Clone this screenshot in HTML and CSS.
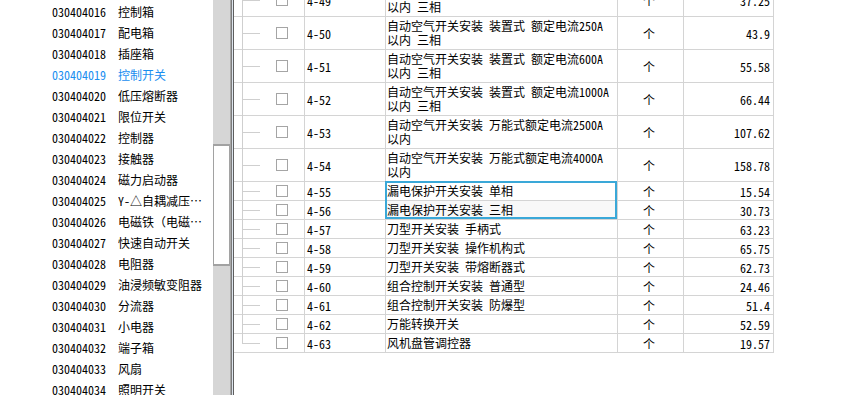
FILE: index.html
```html
<!DOCTYPE html>
<html lang="zh-CN">
<head>
<meta charset="utf-8">
<title>清单定额</title>
<link rel="stylesheet" href="styles.css">
</head>
<body>
<div class="app">
  <aside class="left">
    <ul class="list">
      <li class="item"><span class="code">030404016</span><span class="name">控制箱</span></li>
      <li class="item"><span class="code">030404017</span><span class="name">配电箱</span></li>
      <li class="item"><span class="code">030404018</span><span class="name">插座箱</span></li>
      <li class="item active"><span class="code">030404019</span><span class="name">控制开关</span></li>
      <li class="item"><span class="code">030404020</span><span class="name">低压熔断器</span></li>
      <li class="item"><span class="code">030404021</span><span class="name">限位开关</span></li>
      <li class="item"><span class="code">030404022</span><span class="name">控制器</span></li>
      <li class="item"><span class="code">030404023</span><span class="name">接触器</span></li>
      <li class="item"><span class="code">030404024</span><span class="name">磁力启动器</span></li>
      <li class="item"><span class="code">030404025</span><span class="name">Y-△自耦减压启动器</span></li>
      <li class="item"><span class="code">030404026</span><span class="name full">电磁铁（电磁制动器）</span></li>
      <li class="item"><span class="code">030404027</span><span class="name">快速自动开关</span></li>
      <li class="item"><span class="code">030404028</span><span class="name">电阻器</span></li>
      <li class="item"><span class="code">030404029</span><span class="name">油浸频敏变阻器</span></li>
      <li class="item"><span class="code">030404030</span><span class="name">分流器</span></li>
      <li class="item"><span class="code">030404031</span><span class="name">小电器</span></li>
      <li class="item"><span class="code">030404032</span><span class="name">端子箱</span></li>
      <li class="item"><span class="code">030404033</span><span class="name">风扇</span></li>
      <li class="item"><span class="code">030404034</span><span class="name">照明开关</span></li>
    </ul>
  </aside>
  <div class="vscroll"><div class="thumb"></div></div>
  <div class="divider"></div>
  <main class="grid">
    <div class="rows">
      <div class="row tall"><div class="c-tree"><span class="cb"></span></div><div class="c-code">4-49</div><div class="c-desc">自动空气开关安装 装置式 额定电流100A<br>以内 三相</div><div class="c-unit">个</div><div class="c-price">37.25</div></div>
      <div class="row tall"><div class="c-tree"><span class="cb"></span></div><div class="c-code">4-50</div><div class="c-desc">自动空气开关安装 装置式 额定电流250A<br>以内 三相</div><div class="c-unit">个</div><div class="c-price">43.9</div></div>
      <div class="row tall"><div class="c-tree"><span class="cb"></span></div><div class="c-code">4-51</div><div class="c-desc">自动空气开关安装 装置式 额定电流600A<br>以内 三相</div><div class="c-unit">个</div><div class="c-price">55.58</div></div>
      <div class="row tall"><div class="c-tree"><span class="cb"></span></div><div class="c-code">4-52</div><div class="c-desc">自动空气开关安装 装置式 额定电流1000A<br>以内 三相</div><div class="c-unit">个</div><div class="c-price">66.44</div></div>
      <div class="row tall"><div class="c-tree"><span class="cb"></span></div><div class="c-code">4-53</div><div class="c-desc">自动空气开关安装 万能式额定电流2500A<br>以内</div><div class="c-unit">个</div><div class="c-price">107.62</div></div>
      <div class="row tall"><div class="c-tree"><span class="cb"></span></div><div class="c-code">4-54</div><div class="c-desc">自动空气开关安装 万能式额定电流4000A<br>以内</div><div class="c-unit">个</div><div class="c-price">158.78</div></div>
      <div class="row"><div class="c-tree"><span class="cb"></span></div><div class="c-code">4-55</div><div class="c-desc sel">漏电保护开关安装 单相<span class="sel-box"></span></div><div class="c-unit">个</div><div class="c-price">15.54</div></div>
      <div class="row"><div class="c-tree"><span class="cb"></span></div><div class="c-code">4-56</div><div class="c-desc sel-fill">漏电保护开关安装 三相</div><div class="c-unit">个</div><div class="c-price">30.73</div></div>
      <div class="row"><div class="c-tree"><span class="cb"></span></div><div class="c-code">4-57</div><div class="c-desc">刀型开关安装 手柄式</div><div class="c-unit">个</div><div class="c-price">63.23</div></div>
      <div class="row"><div class="c-tree"><span class="cb"></span></div><div class="c-code">4-58</div><div class="c-desc">刀型开关安装 操作机构式</div><div class="c-unit">个</div><div class="c-price">65.75</div></div>
      <div class="row"><div class="c-tree"><span class="cb"></span></div><div class="c-code">4-59</div><div class="c-desc">刀型开关安装 带熔断器式</div><div class="c-unit">个</div><div class="c-price">62.73</div></div>
      <div class="row"><div class="c-tree"><span class="cb"></span></div><div class="c-code">4-60</div><div class="c-desc">组合控制开关安装 普通型</div><div class="c-unit">个</div><div class="c-price">24.46</div></div>
      <div class="row"><div class="c-tree"><span class="cb"></span></div><div class="c-code">4-61</div><div class="c-desc">组合控制开关安装 防爆型</div><div class="c-unit">个</div><div class="c-price">51.4</div></div>
      <div class="row"><div class="c-tree"><span class="cb"></span></div><div class="c-code">4-62</div><div class="c-desc">万能转换开关</div><div class="c-unit">个</div><div class="c-price">52.59</div></div>
      <div class="row last"><div class="c-tree"><span class="cb"></span></div><div class="c-code">4-63</div><div class="c-desc">风机盘管调控器</div><div class="c-unit">个</div><div class="c-price">19.57</div></div>
    </div>
  </main>
</div>
</body>
</html>
```
FILE: styles.css
```css
* {
  box-sizing: border-box;
}

html, body {
  margin: 0;
  padding: 0;
  background: #ffffff;
}

body {
  width: 858px;
  height: 395px;
  overflow: hidden;
  font-family: "Noto Sans CJK SC", "Noto Sans", sans-serif;
  font-size: 12px;
  color: #000000;
  font-feature-settings: "hwid" 1;
}

.app {
  display: flex;
  height: 395px;
}

/* left category list */
.left {
  width: 213px;
  flex: none;
  overflow: hidden;
  background: #ffffff;
}

.list {
  list-style: none;
  margin: 0;
  padding: 1px 0 0 0;
}

.item {
  display: flex;
  align-items: center;
  height: 21px;
  line-height: 21px;
  white-space: nowrap;
}

.item .code {
  width: 118px;
  padding-left: 52px;
  flex: none;
}

.item .name {
  width: 85px;
  overflow: hidden;
  text-overflow: ellipsis;
  white-space: nowrap;
}

.item .name.full {
  font-feature-settings: normal;
}

.item.active {
  color: #198ef0;
}

/* vertical scrollbar */
.vscroll {
  width: 17px;
  flex: none;
  background: #d6d6d6;
  display: flex;
  flex-direction: column;
}

.thumb {
  margin-top: 144px;
  height: 122px;
  background: #ffffff;
  border: 1px solid #a2a2a2;
  border-top-width: 2px;
  border-bottom-width: 2px;
}

/* splitter */
.divider {
  width: 4px;
  flex: none;
  background: linear-gradient(to right, #a8a8a8 0 1px, #7c7c7c 1px 2px, #dde5ee 2px 3px, #5e5e5e 3px 4px);
}

/* right grid */
.grid {
  flex: 1;
  overflow: hidden;
  background: #ffffff;
}

.rows {
  width: 540px;
  margin-top: -16px;
}

.row {
  display: flex;
  height: 19px;
  border-bottom: 1px solid #d4d4d4;
}

.row.tall {
  height: 33px;
}

.row > div {
  display: flex;
  align-items: center;
  white-space: nowrap;
}

.c-tree {
  width: 70px;
  position: relative;
}

.c-tree::before {
  content: "";
  position: absolute;
  left: 8px;
  top: 0;
  bottom: -1px;
  width: 1px;
  background: #cfcfcf;
}

.row.last .c-tree::before {
  bottom: 50%;
}

.c-tree::after {
  content: "";
  position: absolute;
  left: 8px;
  top: 50%;
  width: 18px;
  height: 1px;
  background: #cfcfcf;
}

.cb {
  display: block;
  width: 12px;
  height: 12px;
  margin-left: 42px;
  border: 1px solid #a5a5a5;
  background: #ffffff;
}

.c-code {
  width: 81px;
  border-left: 1px solid #d4d4d4;
  padding-left: 2px;
}

.c-desc {
  width: 232px;
  border-left: 1px solid #d4d4d4;
  padding-left: 1px;
  line-height: 14px;
}

.c-desc.sel {
  position: relative;
}

.sel-box {
  position: absolute;
  left: -1px;
  top: -1px;
  width: 232px;
  height: 38px;
  border: 2px solid #3aa8d8;
}

.c-desc.sel-fill {
  background: #f8f8f8;
}

.c-unit {
  width: 66px;
  border-left: 1px solid #d4d4d4;
  justify-content: center;
  padding-right: 3px;
}

.c-price {
  width: 91px;
  border-left: 1px solid #d4d4d4;
  border-right: 1px solid #d4d4d4;
  justify-content: flex-end;
  padding-right: 3px;
}
```
